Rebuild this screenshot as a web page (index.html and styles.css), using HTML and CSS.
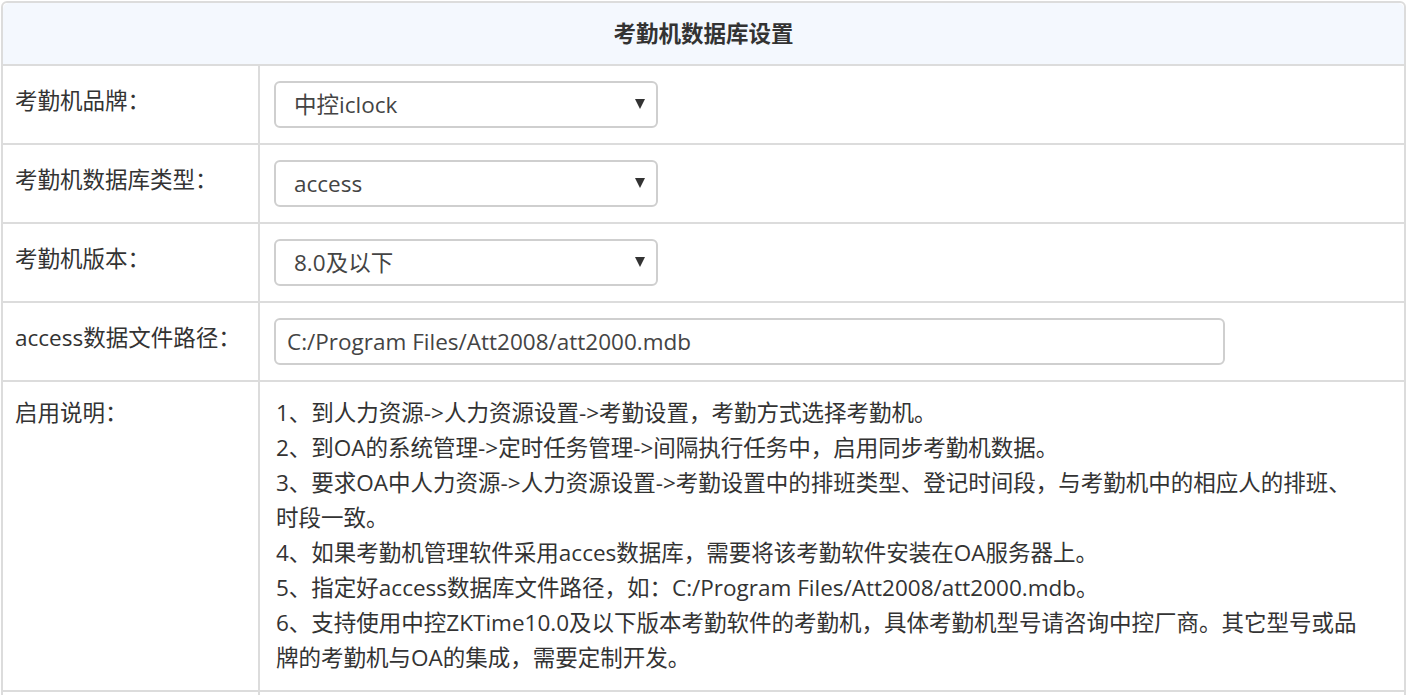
FILE: index.html
```html
<!DOCTYPE html>
<html>
  <head>
    <title>考勤机数据库设置</title>
    <link rel="stylesheet" href="styles.css">
  </head>
  <body>
    <table class="setting-table">
      <thead>
        <tr>
          <th colspan="2" class="table-title">考勤机数据库设置</th>
        </tr>
      </thead>
      <tbody>
        <tr>
          <td class="label-cell">考勤机品牌：</td>
          <td class="value-cell">
            <div class="select-box">
              <select class="select">
                <option>中控iclock</option>
              </select>
            </div>
          </td>
        </tr>
        <tr>
          <td class="label-cell">考勤机数据库类型：</td>
          <td class="value-cell">
            <div class="select-box">
              <select class="select">
                <option>access</option>
              </select>
            </div>
          </td>
        </tr>
        <tr>
          <td class="label-cell">考勤机版本：</td>
          <td class="value-cell">
            <div class="select-box">
              <select class="select">
                <option>8.0及以下</option>
              </select>
            </div>
          </td>
        </tr>
        <tr>
          <td class="label-cell">access数据文件路径：</td>
          <td class="value-cell">
            <input type="text" class="path-input" value="C:/Program Files/Att2008/att2000.mdb">
          </td>
        </tr>
        <tr>
          <td class="label-cell label-notes">启用说明：</td>
          <td class="value-cell notes-cell">
            <div class="notes">
              <p>1、到人力资源-&gt;人力资源设置-&gt;考勤设置，考勤方式选择考勤机。</p>
              <p>2、到OA的系统管理-&gt;定时任务管理-&gt;间隔执行任务中，启用同步考勤机数据。</p>
              <p>3、要求OA中人力资源-&gt;人力资源设置-&gt;考勤设置中的排班类型、登记时间段，与考勤机中的相应人的排班、<br>时段一致。</p>
              <p>4、如果考勤机管理软件采用acces数据库，需要将该考勤软件安装在OA服务器上。</p>
              <p>5、指定好access数据库文件路径，如：C:/Program Files/Att2008/att2000.mdb。</p>
              <p>6、支持使用中控ZKTime10.0及以下版本考勤软件的考勤机，具体考勤机型号请咨询中控厂商。其它型号或品<br>牌的考勤机与OA的集成，需要定制开发。</p>
            </div>
          </td>
        </tr>
        <tr>
          <td class="label-cell"></td>
          <td class="value-cell">&nbsp;</td>
        </tr>
      </tbody>
    </table>
  </body>
</html>
```

FILE: styles.css
```css
body {
  font-family: "Open Sans", "Noto Sans CJK SC", sans-serif;
  font-size: 22.5px;
  color: #333;
  margin: 1px;
  background: #fff;
}

.setting-table {
  width: 1405px;
  border-collapse: separate;
  border-spacing: 0;
  border: 2px solid #dcdcdc;
  border-radius: 6px 6px 0 0;
  line-height: 35px;
}

.table-title {
  background-color: #f4f8fe;
  font-weight: bold;
  text-align: center;
  padding: 13px 0 13px;
  border-bottom: 2px solid #dcdcdc;
  border-radius: 6px 6px 0 0;
}

.setting-table td {
  vertical-align: top;
  border-bottom: 2px solid #dcdcdc;
}

.label-cell {
  width: 243px;
  padding: 15px 0 15px 12px;
  border-right: 2px solid #dcdcdc;
  line-height: 39px;
}

.label-notes {
  padding-top: 13px;
  line-height: 35px;
}

.value-cell {
  padding: 15px 16px 15px 14px;
}

.select-box {
  position: relative;
  width: 384px;
}

.select {
  -webkit-appearance: none;
  appearance: none;
  box-sizing: border-box;
  width: 384px;
  height: 47px;
  padding: 0 40px 0 18px;
  border: 2px solid #cfcfcf;
  border-radius: 6px;
  background: #fff;
  font-family: inherit;
  font-size: 22.5px;
  color: #444;
  outline: none;
}

.select-box::after {
  content: "";
  position: absolute;
  right: 13px;
  top: 18px;
  width: 0;
  height: 0;
  border-left: 5px solid transparent;
  border-right: 5px solid transparent;
  border-top: 10px solid #333;
  pointer-events: none;
}

.path-input {
  box-sizing: border-box;
  width: 951px;
  height: 47px;
  padding: 0 11px;
  border: 2px solid #cfcfcf;
  border-radius: 6px;
  font-family: inherit;
  font-size: 22.5px;
  color: #444;
  outline: none;
}

.notes-cell {
  padding-top: 13px;
  padding-bottom: 15px;
}

.notes {
  padding-left: 2px;
}

.notes p {
  margin: 0;
}
```
